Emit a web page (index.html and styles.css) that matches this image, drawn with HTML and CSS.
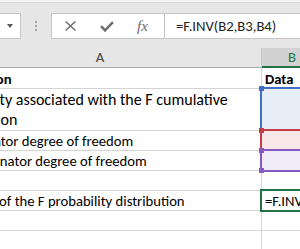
FILE: index.html
```html
<!DOCTYPE html>
<html lang="en">
<head>
  <meta charset="UTF-8">
  <title>F.INV</title>
  <link rel="stylesheet" href="styles.css">
</head>
<body>
  <!-- Formula bar -->
  <div class="formula-bar">
    <div class="name-box"><span class="caret"></span></div>
    <div class="grip"><i></i><i></i><i></i></div>
    <div class="fx-buttons">
      <svg class="icon-cancel" width="11" height="10" viewBox="0 0 11 10">
        <path d="M0.6 0.5 L10.4 9.5 M10.4 0.5 L0.6 9.5" stroke="#6b6b6b" stroke-width="1.4" fill="none"/>
      </svg>
      <svg class="icon-enter" width="14" height="11" viewBox="0 0 14 11">
        <path d="M1 5.2 L5 9.4 L13 1.2" stroke="#6b6b6b" stroke-width="2.4" fill="none"/>
      </svg>
      <span class="fx">fx</span>
    </div>
    <div class="formula-input">=F.INV(B2,B3,B4)</div>
  </div>

  <!-- Sheet -->
  <div class="sheet">
    <div class="row head">
      <div class="cell col-a">A</div>
      <div class="cell col-b">B</div>
    </div>
    <div class="row r1">
      <div class="cell col-a bold">Description</div>
      <div class="cell col-b bold">Data</div>
    </div>
    <div class="row r2">
      <div class="cell col-a big">Probability associated with the F cumulative<br>distribution</div>
      <div class="cell col-b ref ref-blue"></div>
    </div>
    <div class="row">
      <div class="cell col-a indent">Numerator degree of freedom</div>
      <div class="cell col-b ref ref-red"></div>
    </div>
    <div class="row">
      <div class="cell col-a indent">Denominator degree of freedom</div>
      <div class="cell col-b ref ref-purple"><span class="handle-bottom"></span></div>
    </div>
    <div class="row">
      <div class="cell col-a"></div>
      <div class="cell col-b"></div>
    </div>
    <div class="row">
      <div class="cell col-a indent">Inverse of the F probability distribution</div>
      <div class="cell col-b active">=F.INV</div>
    </div>
    <div class="row">
      <div class="cell col-a"></div>
      <div class="cell col-b"></div>
    </div>
    <div class="row">
      <div class="cell col-a"></div>
      <div class="cell col-b"></div>
    </div>
  </div>
</body>
</html>
```

FILE: styles.css
```css
/* General */
body {
  margin: 0;
  width: 300px;
  height: 249px;
  overflow: hidden;
  background-color: #fff;
  font-family: Calibri, Carlito, Lato, sans-serif;
  font-size: 14.67px;
  color: #000;
}

/* Formula bar */
.formula-bar {
  display: flex;
  align-items: flex-start;
  height: 48px;
  box-sizing: border-box;
  padding-top: 11px;
  background-color: #e6e6e6;
  border-top: 2px solid #f3f3f3;
  box-shadow: inset 0 1px #d8d8d8;
}

.name-box {
  display: flex;
  flex-shrink: 0;
  align-items: center;
  justify-content: flex-end;
  width: 41px;
  height: 26px;
  margin-left: -20px;
  padding-right: 7px;
  box-sizing: border-box;
  background-color: #fff;
  border: 1px solid #c6c6c6;
}

.caret {
  width: 0;
  height: 0;
  border-left: 3px solid transparent;
  border-right: 3px solid transparent;
  border-top: 4px solid #595959;
}

.grip {
  display: flex;
  flex-direction: column;
  flex-shrink: 0;
  gap: 2px;
  margin-left: 14px;
  padding-top: 8px;
}

.grip i {
  width: 2px;
  height: 2px;
  background-color: #a3a3a3;
}

.fx-buttons {
  display: flex;
  flex-shrink: 0;
  align-items: center;
  width: 113px;
  height: 26px;
  margin-left: 14px;
  padding-left: 13px;
  box-sizing: border-box;
  background-color: #fff;
  border: 1px solid #c6c6c6;
  border-right: none;
}

.icon-enter {
  margin-left: 24px;
}

.fx {
  margin-left: 23px;
  font-family: "Liberation Serif", serif;
  font-style: italic;
  font-size: 15px;
  color: #6b6b6b;
}

.formula-input {
  flex: 1;
  height: 26px;
  margin-right: -60px;
  padding-left: 11px;
  box-sizing: border-box;
  line-height: 25px;
  background-color: #fff;
  border: 1px solid #c6c6c6;
  color: #222;
}

/* Sheet grid */
.sheet {
  margin-left: -61px;
}

.row {
  display: flex;
  height: 20px;
}

.row.r1 {
  height: 21px;
}

.row.r2 {
  height: 42px;
}

.cell {
  display: flex;
  flex-shrink: 0;
  align-items: flex-end;
  box-sizing: border-box;
  padding: 0 3px;
  line-height: 17px;
  white-space: nowrap;
  border-right: 1px solid #d4d4d4;
  border-bottom: 1px solid #d4d4d4;
}

.col-a {
  width: 323px;
}

.col-b {
  width: 61px;
}

.bold {
  font-weight: bold;
}

.big {
  font-size: 16px;
  line-height: 20px;
}

.indent {
  padding-left: 14px;
}

/* Column headers */
.head .cell {
  justify-content: center;
  align-items: center;
  line-height: 19px;
  background-color: #e6e6e6;
  color: #444;
  border-bottom-color: #ababab;
}

.head .col-a {
  border-right-color: #c6c6c6;
}

.head .col-b {
  background-color: #d2d2d2;
  color: #217346;
  border-bottom: 2px solid #217346;
}

/* Formula reference ranges */
.ref {
  position: relative;
}

.ref::after {
  content: "";
  position: absolute;
  left: -2px;
  top: -2px;
  right: -10px;
  bottom: -2px;
  border: 2px solid var(--ref);
}

.ref::before,
.handle-bottom {
  content: "";
  position: absolute;
  left: -3px;
  top: -3px;
  width: 5px;
  height: 5px;
  background-color: var(--ref);
  z-index: 1;
}

.handle-bottom {
  top: auto;
  bottom: -3px;
}

.ref-blue {
  --ref: #3e70c9;
  background-color: #e8eef8;
}

.ref-red {
  --ref: #c43c45;
  background-color: #f9e8e8;
}

.ref-purple {
  --ref: #8659c0;
  background-color: #f0ebf8;
}

/* Active cell */
.active {
  position: relative;
}

.active::after {
  content: "";
  position: absolute;
  left: -2px;
  top: -2px;
  right: -10px;
  bottom: -2px;
  border: 2px solid #217346;
}
```
